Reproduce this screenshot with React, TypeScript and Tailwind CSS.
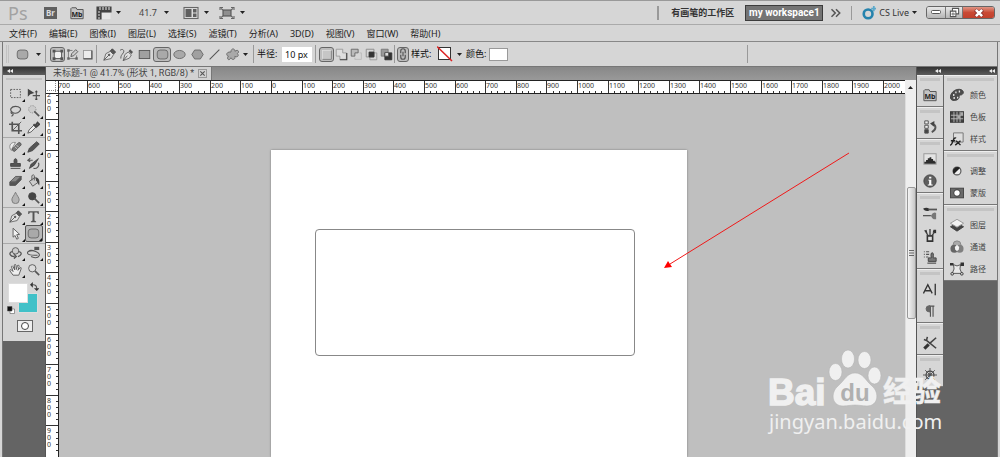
import type { ReactNode } from "react";
import clsx from "clsx";

type IconProps = { children: ReactNode; className?: string };

function Icon({ children, className = "size-4" }: IconProps) {
  return (
    <svg
      viewBox="0 0 16 16"
      className={clsx("block shrink-0", className)}
      fill="none"
      stroke="#555"
      strokeWidth="1.1"
      aria-hidden="true"
    >
      {children}
    </svg>
  );
}

function Caret() {
  return (
    <svg viewBox="0 0 5 3" className="block h-[3px] w-[5px] shrink-0" aria-hidden="true">
      <path d="M0 0h5L2.500 3z" fill="#222" />
    </svg>
  );
}

function Divider() {
  return <div className="h-[18px] w-px shrink-0 bg-[#999]" />;
}

const penPath = (
  <>
    <path d="M1 15l2.500-8L9 4l4 4-3 5z" fill="#e2e2e2" stroke="#666" />
    <path d="M1 15l6-6" />
    <circle cx="7.500" cy="8.500" r="1" fill="#444" />
    <path d="M9 3.500L11.500 1l4 4-2.500 2.500z" fill="#555" stroke="#444" />
  </>
);

const roundedRect = <rect x="1.500" y="2.500" width="13" height="11" rx="3.500" fill="#a9a9a9" stroke="#666" />;

/* ---------- title bar ---------- */

const menus = [
  "文件(F)", "编辑(E)", "图像(I)", "图层(L)", "选择(S)", "滤镜(T)",
  "分析(A)", "3D(D)", "视图(V)", "窗口(W)", "帮助(H)",
];

function MiniBridge() {
  return (
    <>
      <path d="M1 14.500V3l1-1h5l1 2h7v10.500z" fill="#c4c4c4" stroke="#555" />
      <text x="8" y="13" fontSize="8" fontWeight="bold" textAnchor="middle" fill="#222" stroke="none">Mb</text>
    </>
  );
}

function TitleBar() {
  return (
    <header className="flex h-6 items-center border-b border-[#aaa] pr-[5px] pl-2">
      <div className="w-9 text-lg leading-none text-[#a2a2a2]">Ps</div>
      <button className="flex h-3 w-[13px] items-center justify-center bg-[#606060] text-[8px] font-bold text-[#ddd]">
        Br
      </button>
      <button aria-label="Mini Bridge" className="ml-[13px]">
        <Icon className="size-[14px]"><MiniBridge /></Icon>
      </button>
      <button aria-label="View extras" className="ml-3 flex items-center gap-1">
        <Icon>
          <path d="M1 14V2h14v5H5v7z" fill="#444" stroke="#444" />
          <path d="M6 8h8.500v6H6z" fill="#e6e6e6" stroke="none" />
          <path d="M4 2v3M7 2v3M10 2v3M13 2v3M2 7h2M2 10h2M2 13h2" stroke="#ddd" />
        </Icon>
        <Caret />
      </button>
      <button className="ml-[18px] flex items-center gap-[7px] text-[9px] text-[#444]">
        41.7
        <Caret />
      </button>
      <button aria-label="Arrange documents" className="ml-[14px] flex items-center gap-[5px]">
        <Icon>
          <rect x="1" y="2.500" width="14" height="11" fill="#ddd" stroke="#666" />
          <path d="M2.500 4h6v8h-6zM10 4h3.500v3.500H10zM10 8.500h3.500V12H10z" fill="#606060" stroke="none" />
        </Icon>
        <Caret />
      </button>
      <button aria-label="Screen mode" className="ml-[10px] flex items-center gap-[5px]">
        <Icon>
          <rect x="4" y="5" width="8" height="6" fill="#8f8f8f" stroke="#555" />
          <path d="M1 5V2.500h3M12 2.500h3V5M15 11v2.500h-3M4 13.500H1V11M2 3.500l2 1.500M14 3.500L12 5M14 12.500L12 11M2 12.500L4 11" stroke="#666" />
        </Icon>
        <Caret />
      </button>

      <div className="ml-auto h-[14px] w-[2px] bg-[#999]" />
      <button className="ml-3 text-[9px] font-bold whitespace-nowrap text-[#333]">有画笔的工作区</button>
      <button className="ml-[11px] h-4 w-[78px] border border-[#3c3c3c] bg-[#747474] font-[Roboto,sans-serif] text-[10px] leading-none font-bold whitespace-nowrap text-white">
        my workspace1
      </button>
      <button aria-label="More workspaces" className="ml-[7px]">
        <Icon className="size-[12px]">
          <path d="M2 3l5 5-5 5M8 3l5 5-5 5" strokeWidth="2" />
        </Icon>
      </button>
      <div className="ml-[9px] h-[14px] w-px bg-[#999]" />
      <button className="ml-[10px] flex items-center gap-[3px] text-[9px] whitespace-nowrap text-[#333]">
        <Icon className="size-[14px]">
          <circle cx="7" cy="9" r="5" stroke="#2583ad" strokeWidth="3" />
          <path d="M13.500 0v6M10.500 3h6" stroke="#5aa9cb" strokeWidth="2" />
        </Icon>
        CS Live
        <Caret />
      </button>
      <div className="ml-[9px] flex h-[13px] overflow-hidden rounded-[3px] border border-[#666]">
        <button aria-label="Minimize" className="flex w-[18px] items-center justify-center bg-linear-to-b from-[#e8e8e8] to-[#b5b5b5]">
          <svg viewBox="0 0 10 5" className="h-[5px] w-[10px]">
            <rect x="0.500" y="0.500" width="9" height="3" rx="1" fill="#fff" stroke="#555" />
          </svg>
        </button>
        <button aria-label="Restore" className="flex w-[18px] items-center justify-center border-x border-[#777] bg-linear-to-b from-[#e8e8e8] to-[#b5b5b5]">
          <Icon className="size-[11px]">
            <path d="M5 2h9v8H5z" fill="#fff" strokeWidth="1.500" />
            <path d="M2 6h8v8H2z" fill="#fff" strokeWidth="1.500" />
            <path d="M4.500 9h3v2.500h-3z" />
          </Icon>
        </button>
        <button aria-label="Close" className="flex w-[31px] items-center justify-center bg-linear-to-b from-[#e09585] via-[#c94a35] to-[#c2402c]">
          <Icon className="size-[10px]">
            <path d="M2 3l12 10M14 3L2 13" stroke="#833" strokeWidth="6" />
            <path d="M3 3l10 10M13 3L3 13" stroke="#fff" strokeWidth="4" />
          </Icon>
        </button>
      </div>
    </header>
  );
}

function MenuBar() {
  return (
    <nav className="flex h-[17px] items-center gap-3 border-b border-[#888] pl-[9px] text-[9px] text-[#222]">
      {menus.map((m) => (
        <button key={m} className="leading-none whitespace-nowrap">{m}</button>
      ))}
    </nav>
  );
}

/* ---------- options bar ---------- */

type Option = { label: string; icon: ReactNode; width: string; active?: boolean };

function OptionButton({ label, icon, width, active }: Option) {
  return (
    <button
      aria-label={label}
      aria-pressed={!!active}
      className={clsx(
        "flex h-[15px] shrink-0 items-center justify-center",
        width,
        active && "rounded-[3px] border border-[#666] bg-[#bdbdbd]",
      )}
    >
      <Icon className="size-[13px]">{icon}</Icon>
    </button>
  );
}

const modes: Option[] = [
  {
    label: "Shape layers", width: "w-[15px]", active: true,
    icon: (
      <>
        <rect x="4" y="4" width="9" height="9" fill="#f2f2f2" />
        <path d="M2 2h3.500v3.500H2zM11.500 2H15v3.500h-3.500zM2 11.500h3.500V15H2zM11.500 11.500H15V15h-3.500z" fill="#555" stroke="none" />
      </>
    ),
  },
  {
    label: "Paths", width: "w-[15px]",
    icon: (
      <>
        <path d="M3 3v10h10V9M3 3h5" stroke="#777" />
        <path d="M1.500 1.500h3v3h-3zM1.500 11.500h3v3h-3zM11.500 11.500h3v3h-3z" fill="#666" stroke="none" />
        <path d="M6 10.500l1-3.500 5-5 2.500 2.500-5 5z" fill="#ccc" />
      </>
    ),
  },
  {
    label: "Fill pixels", width: "w-[15px]",
    icon: (
      <>
        <rect x="3" y="3" width="10" height="10" fill="#ececec" stroke="#999" />
        <path d="M13.500 3v10.500H3" stroke="#555" strokeWidth="1.500" />
      </>
    ),
  },
];

const shapes: Option[] = [
  { label: "Pen", width: "w-[17px]", icon: penPath },
  {
    label: "Freeform pen", width: "w-[17px]",
    icon: (
      <>
        <path d="M4 15.500l2-7.500 4-3 4 3.500-2.500 4z" fill="#e2e2e2" stroke="#666" />
        <path d="M4 15.500l5-6" />
        <path d="M10.500 4L12.500 1.500l3.500 3.500-2 2.500z" fill="#555" stroke="none" />
        <path d="M0 3c3-3 6 0 4 3s-3 3-3 7" />
      </>
    ),
  },
  { label: "Rectangle", width: "w-[18px]", icon: <rect x="1.500" y="3" width="13" height="10" fill="#a0a0a0" stroke="#555" /> },
  { label: "Rounded rectangle", width: "w-[18px]", active: true, icon: roundedRect },
  { label: "Ellipse", width: "w-[17px]", icon: <ellipse cx="8" cy="8" rx="7" ry="5" fill="#a9a9a9" stroke="#666" /> },
  { label: "Polygon", width: "w-[18px]", icon: <path d="M4.500 2.500h7L15 8l-3.500 5.500h-7L1 8z" fill="#a0a0a0" stroke="#666" /> },
  { label: "Line", width: "w-[17px]", icon: <path d="M2 14L14 2" strokeWidth="1.300" /> },
  {
    label: "Custom shape", width: "w-[18px]",
    icon: <path d="M6 5c0-5 5-5 5-1 4-3 6 1 3 3 3 3-1 5-3 3 1 5-4 5-5 2-2 5-6 1-3-2-4-1-2-6 3-5z" fill="#a9a9a9" stroke="#666" />,
  },
];

const areas: Option[] = [
  {
    label: "Create new shape layer", width: "w-[15px]", active: true,
    icon: (
      <>
        <rect x="3" y="3" width="11" height="11" fill="#c6c6c6" stroke="#ddd" />
        <path d="M14 3v11H3" stroke="#777" />
      </>
    ),
  },
  {
    label: "Add to shape area", width: "w-[15px]",
    icon: (
      <>
        <path d="M1.500 1.500h8v4.500h4.500v8H6V10H1.500z" fill="#dedede" stroke="#999" />
        <path d="M14.500 6v8.500H6" stroke="#444" strokeWidth="1.400" />
      </>
    ),
  },
  {
    label: "Subtract from shape area", width: "w-[15px]",
    icon: (
      <>
        <path d="M1.500 10V1.500H10V6H6v4z" fill="#bbb" stroke="#666" />
        <path d="M6 12v2h8V6h-2" stroke="#bbb" />
      </>
    ),
  },
  {
    label: "Intersect shape areas", width: "w-[15px]",
    icon: (
      <>
        <path d="M1.500 1.500H11V11H1.500z" stroke="#888" />
        <path d="M6 6h8.500v8.500H6z" stroke="#999" />
        <path d="M5 5h6v6H5z" fill="#333" stroke="#333" />
      </>
    ),
  },
  {
    label: "Exclude overlapping shape areas", width: "w-[15px]",
    icon: (
      <>
        <path d="M1.500 1.500H10V10H1.500z" fill="#999" stroke="#777" />
        <path d="M6 6h8.500v8.500H6z" fill="#333" stroke="#333" />
        <path d="M6 5.500h4.500v4.500H6z" fill="#ddd" />
      </>
    ),
  },
];

function OptionsBar() {
  return (
    <div className="flex h-[25px] items-center border-b border-[#777] text-[9px] text-[#111]">
      <div className="flex w-[42px] shrink-0 items-center">
        <div className="ml-[3px] h-[18px] w-[3px] border-x border-[#c2c2c2]" />
        <button aria-label="Tool preset" className="ml-[7px] flex items-center gap-[7px]">
          <Icon className="size-[13px]">{roundedRect}</Icon>
          <Caret />
        </button>
      </div>
      <Divider />
      <div className="flex w-[50px] shrink-0 items-center pl-1">
        {modes.map((o) => <OptionButton key={o.label} {...o} />)}
      </div>
      <Divider />
      <div className="flex w-[156px] shrink-0 items-center pl-1">
        {shapes.map((o) => <OptionButton key={o.label} {...o} />)}
        <button aria-label="Shape options" className="pl-[2px]"><Caret /></button>
      </div>
      <Divider />
      <label htmlFor="radius" className="ml-[3px] w-[25px] whitespace-nowrap">半径:</label>
      <input id="radius" defaultValue="10 px" className="h-[15px] w-[30px] bg-white px-[3px] text-[9px] outline-none" />
      <div className="ml-[3px]"><Divider /></div>
      <div className="flex w-[78px] shrink-0 items-center pl-[3px]">
        {areas.map((o) => <OptionButton key={o.label} {...o} />)}
      </div>
      <Divider />
      <button
        aria-label="Link style to layer"
        className="ml-[2px] flex h-[15px] w-[12px] items-center justify-center rounded-[3px] border border-[#666] bg-[#bdbdbd]"
      >
        <Icon className="size-[12px]">
          <path d="M5 7V4a3 3 0 016 0v3M5 9v3a3 3 0 006 0V9M8 5v6" strokeWidth="1.600" />
        </Icon>
      </button>
      <button className="ml-[2px] flex items-center whitespace-nowrap">
        <span className="w-[26px] text-left">样式:</span>
        <svg viewBox="0 0 16 16" className="mr-1 size-4">
          <rect x="1.500" y="1.500" width="12" height="12" fill="#fff" stroke="#333" />
          <path d="M0 0.500l15 14.500" stroke="#d22" strokeWidth="1.500" />
        </svg>
        <Caret />
      </button>
      <button className="ml-1 flex items-center gap-[3px] whitespace-nowrap">
        颜色:
        <span className="h-[13px] w-[19px] border border-[#999] bg-white" />
      </button>
      <div className="mr-[249px] ml-auto"><Divider /></div>
    </div>
  );
}

/* ---------- tool panel ---------- */

type Tool = { name: string; icon: ReactNode; active?: boolean; single?: boolean };

const toolGroups: Tool[][] = [
  [
    { name: "Marquee", icon: <rect x="2" y="3" width="12" height="10" strokeDasharray="2 1.500" /> },
    {
      name: "Move", single: true,
      icon: (
        <>
          <path d="M1 2v10l3-3 5-1.500z" fill="#444" stroke="none" />
          <path d="M11.500 6v9M7 10.500h9" strokeWidth="1.500" />
          <path d="M11.500 4l2 2.500h-4zM11.500 17l2-2.500h-4z" fill="#444" stroke="none" />
        </>
      ),
    },
    { name: "Lasso", icon: <path d="M4 10C0 7 3 3 8 3s8 3 5 6-7 3-9 1-2 2 0 2 1 2-1 3" strokeWidth="1.400" /> },
    {
      name: "Quick selection",
      icon: (
        <>
          <circle cx="6.500" cy="6.500" r="4.500" stroke="#888" strokeDasharray="1.500 1.500" fill="#ccc" />
          <path d="M9 9l6 6" strokeWidth="2" />
        </>
      ),
    },
    {
      name: "Crop",
      icon: (
        <>
          <path d="M4 1v11h12M0 4h12v12" strokeWidth="2" />
          <path d="M4 12L15 1" />
        </>
      ),
    },
    {
      name: "Eyedropper",
      icon: (
        <>
          <path d="M1 15l1.500-4 6-6 2.500 2.500-6 6z" fill="#eee" />
          <path d="M8 4l4 4M10 6l3-4 2 2-3 3" stroke="#444" strokeWidth="2.200" />
        </>
      ),
    },
  ],
  [
    {
      name: "Healing brush",
      icon: (
        <>
          <path d="M3 13C-1 9 1 2 8 3L4 10z" fill="#eee" stroke="#888" />
          <path d="M4 11l8-8q3 0 3 3l-8 8q-3 0-3-3z" fill="#777" />
          <path d="M7 8l3 3M9 6l3 3" stroke="#ccc" />
        </>
      ),
    },
    { name: "Pencil", icon: <path d="M1 15l2-5L12 2l3 3-8 8z" fill="#555" stroke="#444" /> },
    {
      name: "Clone stamp",
      icon: <path d="M6.500 8c-2-8 5-8 3 0H14v3.500H2V8zM2 14h12" fill="#555" stroke="#444" />,
    },
    {
      name: "History brush",
      icon: (
        <>
          <path d="M3 14l2-5 9-7-5 8z" fill="#555" stroke="#444" />
          <path d="M1 4h6M4 1.500L1 4l3 2M14 7c2 4-2 8-6 7" strokeWidth="1.400" />
        </>
      ),
    },
    {
      name: "Eraser",
      icon: (
        <>
          <path d="M1 10l7-7h7l-7 7z" fill="#888" />
          <path d="M1 10v4h7l7-7V3l-7 7z" fill="#555" />
        </>
      ),
    },
    {
      name: "Paint bucket",
      icon: (
        <>
          <path d="M3 9l7-5 4 6-7 5z" fill="#ccc" />
          <path d="M6 8V2q2-2 3 0v6" />
          <path d="M11 4c4 1 5 5 4 10-2-2-2-5-4-6z" fill="#444" stroke="none" />
        </>
      ),
    },
    { name: "Blur", icon: <path d="M8 1.500C6 6 3.500 8 3.500 11a4.500 4.500 0 009 0c0-3-2.500-5-4.500-9.500z" fill="#b5b5b5" stroke="#777" /> },
    {
      name: "Burn",
      icon: (
        <>
          <circle cx="6.500" cy="6.500" r="4.500" fill="#444" stroke="#444" />
          <path d="M9 9l6 6" strokeWidth="2" />
        </>
      ),
    },
  ],
  [
    { name: "Pen", icon: penPath },
    { name: "Type", icon: <path d="M1.500 5V1.500h13V5h-1l-1-2H9.200v10l2 1v1H4.800v-1l2-1V3H3.500l-1 2z" fill="#555" stroke="none" /> },
    { name: "Path selection", icon: <path d="M5 1.500v11l2.500-2 2 4.500 2-1-2-4.500 3.500-.500z" fill="#f2f2f2" /> },
    { name: "Rounded rectangle", active: true, icon: roundedRect },
  ],
  [
    {
      name: "3D object rotate",
      icon: (
        <>
          <circle cx="8" cy="6" r="4" fill="#ccc" />
          <path d="M4 7C-1 8 1 13 7 13M12 7c5 1 3 5-1 6M6 10l3 3-3 2.500" strokeWidth="1.600" />
        </>
      ),
    },
    {
      name: "3D camera rotate",
      icon: (
        <>
          <path d="M9 6C4 5-1 7 1 9.500s9 1.500 12 2M2 6c4-2 15 2 13 6s-8 2-10 1" strokeWidth="1.300" />
          <path d="M9 1h6v4H9z" fill="#555" stroke="none" />
        </>
      ),
    },
    {
      name: "Hand",
      icon: <path d="M5 15L1 9.500q0-2 2-1l2 2-2-6q1-2 2 0l2 4-.500-6q1-2 2 0L9 8l1.500-5q2-1 2 1L11 9l2.500-3q2-1 1.500 1l-3 8z" fill="#eee" />,
    },
    {
      name: "Zoom", single: true,
      icon: (
        <>
          <circle cx="6.500" cy="6.500" r="4.500" fill="#ddd" />
          <path d="M10 10l5 5" strokeWidth="2" />
        </>
      ),
    },
  ],
];

function ToolButton({ name, icon, active, single }: Tool) {
  return (
    <button
      aria-label={name}
      className={clsx(
        "relative flex h-[17px] items-center justify-center",
        active && "rounded-[2px] border border-[#555] bg-[#b8b8b8]",
      )}
    >
      <Icon className="size-[13px]">{icon}</Icon>
      {!single && (
        <svg viewBox="0 0 3 3" className="absolute right-0 bottom-0 size-[3px]">
          <path d="M3 0v3H0z" fill="#111" />
        </svg>
      )}
    </button>
  );
}

function CollapseArrows() {
  return (
    <svg viewBox="0 0 6 4" className="h-[4px] w-[6px]">
      <path d="M3 0v4L0 2zM6 0v4L3 2z" fill="#eee" />
    </svg>
  );
}

function ToolPanel() {
  return (
    <aside className="w-[43px] shrink-0 border-r border-[#555] bg-[#646464]">
      <div className="flex h-2 items-center bg-linear-to-b from-[#333] to-[#5c5c5c] px-1">
        <CollapseArrows />
      </div>
      <div className="bg-[#d6d6d6] pb-[9px]">
        <div className="px-[3px] pt-[3px] pb-[5px]">
          <div className="h-[2px] bg-[#c2c2c2]" />
        </div>
        {toolGroups.map((group, i) => (
          <div
            key={i}
            className={clsx("grid grid-cols-2 pr-[2px] pl-[3px]", i > 0 && "mt-px border-t border-[#aaa]")}
          >
            {group.map((t) => <ToolButton key={t.name} {...t} />)}
          </div>
        ))}
        <div className="relative mt-1 h-[34px]">
          <button aria-label="Background color" className="absolute top-[11px] left-[15px] size-5 border border-[#ddd] bg-[#41c1c8]" />
          <button aria-label="Foreground color" className="absolute top-px left-[5px] size-5 border border-[#ddd] bg-white" />
          <button aria-label="Swap colors" className="absolute top-0 left-[27px]">
            <Icon className="size-[9px]">
              <path d="M4 5q8-1 8 7" strokeWidth="2" />
              <path d="M5 0v10L0 5zM7 11h10l-5 5z" fill="#333" stroke="none" />
            </Icon>
          </button>
          <button aria-label="Default colors" className="absolute top-[24px] left-1">
            <Icon className="size-2">
              <path d="M6 6h9v9H6z" fill="#fff" />
              <path d="M1 1h9v9H1z" fill="#111" />
            </Icon>
          </button>
        </div>
        <button aria-label="Quick mask" className="mt-1 ml-[14px] flex h-3 w-4 items-center justify-center border border-[#666] bg-[#eee]">
          <span className="size-2 rounded-full border border-[#444] bg-white" />
        </button>
      </div>
    </aside>
  );
}

/* ---------- document ---------- */

const STEP = 30.6;

function rulerMarks(origin: number, from: number, to: number) {
  const marks = [];
  for (let i = from; i <= to; i++) {
    marks.push({
      at: Math.round(origin + i * STEP),
      label: String(Math.abs(i) * 100),
      minor: [1, 2, 3, 4].map((k) => Math.round(origin + (i + k / 5) * STEP)),
    });
  }
  return marks;
}

function HorizontalRuler() {
  return (
    <svg className="h-[14px] min-w-0 flex-1 border-y border-[#222] bg-white" aria-hidden="true">
      {rulerMarks(212, -7, 20).map((m) => (
        <g key={m.at}>
          <rect x={m.at} y="0" width="1" height="12" fill="#333" />
          {m.minor.map((x) => <rect key={x} x={x} y="10" width="1" height="2" fill="#333" />)}
          <text x={m.at + 1} y="7" fontSize="7" fill="#333">{m.label}</text>
        </g>
      ))}
    </svg>
  );
}

function VerticalRuler() {
  return (
    <svg className="w-[13px] shrink-0 border-r border-[#222] bg-white" aria-hidden="true">
      {rulerMarks(56, -2, 9).map((m) => (
        <g key={m.at}>
          <rect x="0" y={m.at} width="12" height="1" fill="#333" />
          {m.minor.map((y) => <rect key={y} x="10" y={y} width="2" height="1" fill="#333" />)}
          {m.label.split("").map((d, i) => (
            <text key={i} x="1" y={m.at + 8 + i * 7} fontSize="7" fill="#333">{d}</text>
          ))}
        </g>
      ))}
    </svg>
  );
}

function Canvas() {
  return (
    <div className="relative min-w-0 flex-1 overflow-hidden bg-[#bfbfbf]">
      <div className="absolute top-[56px] bottom-0 left-[212px] w-[416px] bg-white shadow-[0_0_2px_#777]">
        <div className="absolute top-[79px] left-[44px] h-[127px] w-[320px] rounded-[4px] border border-[#888]" />
      </div>
      <svg className="absolute inset-0 size-full" aria-hidden="true">
        <path d="M790 59L611 170" stroke="#f01818" />
        <path d="M605 174l4-7 4 6z" fill="#f00" />
      </svg>
    </div>
  );
}

function Scrollbar() {
  return (
    <div className="flex w-[11px] shrink-0 flex-col items-center border-l border-[#ddd] bg-[#eee]">
      <div className="h-[93px]" />
      <div className="flex h-[132px] w-[9px] items-center justify-center rounded-[2px] border border-[#999] bg-linear-to-r from-[#f4f4f4] to-[#c8c8c8]">
        <svg viewBox="0 0 5 6" className="h-[6px] w-[5px]">
          <path d="M0 .500h5M0 3h5M0 5.500h5" stroke="#666" />
        </svg>
      </div>
    </div>
  );
}

function DocumentWindow() {
  return (
    <main className="flex min-w-0 flex-1 flex-col">
      <div className="flex h-[13px] shrink-0 items-end bg-linear-to-b from-[#888] to-[#999]">
        <div className="flex h-[13px] w-[166px] items-center justify-between border-r border-[#777] bg-[#d2d2d2] pr-[4px] pl-[7px] text-[#444]">
          <span className="font-[Roboto,'Noto_Sans_CJK_SC',sans-serif] text-[9px] leading-none whitespace-nowrap">
            未标题-1 @ 41.7% (形状 1, RGB/8) *
          </span>
          <button aria-label="Close tab" className="flex size-[9px] items-center justify-center border border-[#999]">
            <Icon className="size-[7px]">
              <path d="M3 3l10 10M13 3L3 13" strokeWidth="2.500" />
            </Icon>
          </button>
        </div>
      </div>
      <div className="flex">
        <svg viewBox="0 0 13 14" className="h-[14px] w-[13px] shrink-0 bg-white" aria-hidden="true">
          <path d="M0 .500h13M0 13.500h13M12.500 0v14" stroke="#222" />
          <path d="M9.500 1v12M1 10.500h11" stroke="#888" strokeDasharray="1 1" />
        </svg>
        <HorizontalRuler />
        <button aria-label="Scroll up" className="flex w-[11px] items-center justify-center bg-[#eee]">
          <svg viewBox="0 0 5 3" className="h-[3px] w-[5px]">
            <path d="M0 3h5L2.500 0z" fill="#222" />
          </svg>
        </button>
      </div>
      <div className="flex min-h-[363px] flex-1">
        <VerticalRuler />
        <Canvas />
        <Scrollbar />
      </div>
    </main>
  );
}

/* ---------- right docks ---------- */

type Panel = { name: string; icon: ReactNode };

const iconDock: Panel[][] = [
  [{ name: "Mini Bridge", icon: <MiniBridge /> }],
  [
    {
      name: "History",
      icon: (
        <>
          <path d="M2 1h4v3.500H2zM2 6h4v3.500H2z" fill="#eee" />
          <path d="M2 11h4v4H2z" fill="#444" />
          <path d="M10 14c6-3 5-9 1-9" strokeWidth="2.200" />
          <path d="M8 4l5-3v7z" fill="#444" stroke="none" />
        </>
      ),
    },
  ],
  [
    {
      name: "Histogram",
      icon: (
        <>
          <rect x="1" y="2" width="14" height="12" fill="#e4e4e4" stroke="#999" />
          <path d="M1.500 13.500V11h2V9h2V7h2V6h2v2h2v2h2v1h1v2.500z" fill="#2c2c2c" stroke="none" />
        </>
      ),
    },
    {
      name: "Info",
      icon: (
        <>
          <circle cx="8" cy="8" r="7" fill="#5e5e5e" stroke="#444" />
          <path d="M7 3h2.500v2.200H7zM6 6.500h3.500V12H11v1H5.500v-1H7V7.500H6z" fill="#fff" stroke="none" />
        </>
      ),
    },
  ],
  [
    {
      name: "Brush presets",
      icon: (
        <>
          <path d="M0 3q4-2 7 0v2q-4 2-7-2z" fill="#333" stroke="none" />
          <path d="M6 4h10" strokeWidth="2" />
          <path d="M0 11h9" strokeWidth="1.500" />
          <path d="M9 11q3-5 6-3v7q-4 1-6-4z" fill="#777" stroke="none" />
        </>
      ),
    },
    {
      name: "Brush",
      icon: (
        <>
          <path d="M5 9h6v6H5z" fill="#ddd" stroke="#333" strokeWidth="1.800" />
          <path d="M6 9L3 4M8 9V1M10 9l3-4" stroke="#444" strokeWidth="1.600" />
          <path d="M1 3l3-1 1 4zM11 5l1-3h3v4z" fill="#333" stroke="none" />
        </>
      ),
    },
    {
      name: "Clone source",
      icon: (
        <>
          <path d="M9.500 9c-2-8 4-8 2 0H15v4H6V9z" fill="#777" stroke="#444" />
          <path d="M5 15h10" stroke="#333" />
          <path d="M1 2h1M3.500 2H7M1 5h1M3.500 5H7M1 8h1M3.500 8H6" strokeWidth="1.300" />
        </>
      ),
    },
  ],
  [
    { name: "Character", icon: <path d="M0.500 13L5.500 3l5 10M2.500 10h6M14 2v13" stroke="#333" strokeWidth="1.500" /> },
    {
      name: "Paragraph",
      icon: (
        <>
          <path d="M8.500 2.500v12M11.500 2.500v12M7 2.500h6" strokeWidth="1.300" />
          <path d="M8 2v7H7a3.500 3.500 0 010-7z" fill="#666" stroke="#666" />
        </>
      ),
    },
  ],
  [
    {
      name: "Tool presets",
      icon: (
        <>
          <path d="M1.500 14.500l5-5" stroke="#333" strokeWidth="3.500" />
          <path d="M7 9l8-7M4 5l11 9M1 4l3 1 1-4" stroke="#444" strokeWidth="1.800" />
        </>
      ),
    },
  ],
  [
    {
      name: "Navigator",
      icon: (
        <>
          <circle cx="8" cy="8" r="4.500" stroke="#444" strokeWidth="1.400" />
          <circle cx="8" cy="8" r="1.500" fill="#444" />
          <path d="M8 0v16M0 8h16M2.500 2.500l11 11M13.500 2.500l-11 11" stroke="#555" />
        </>
      ),
    },
  ],
];

const labelDock: Panel[][] = [
  [
    {
      name: "颜色",
      icon: (
        <>
          <path d="M0.500 10C1 4 8 0 13 2c4 2 2 6-1 6s0 3-3 5-9 2-8.500-3z" fill="#4c4c4c" stroke="#444" />
          <path d="M3.500 8H5M6 5h1.500M10 4h1.500M4 11.500h1.500M8 11h1.500" stroke="#e4e4e4" strokeWidth="2.200" />
        </>
      ),
    },
    {
      name: "色板",
      icon: (
        <>
          <rect x="0.500" y="2" width="15" height="12" fill="#444" stroke="#333" />
          <path d="M1 6h14M1 10h14M4.500 2v12M8 2v12M11.500 2v12" stroke="#bbb" strokeWidth="1" />
          <path d="M12 2.500h3V6h-3zM8.500 6.500h3v3h-3z" fill="#aaa" stroke="none" />
        </>
      ),
    },
    {
      name: "样式",
      icon: (
        <>
          <path d="M4 1h11v10.500H4z" fill="#ddd" stroke="#777" />
          <path d="M0 15q2 0 3-4l1-2q1-3 3-2M1 10h5M7 10l5 5M12 10l-6 5" strokeWidth="1.600" stroke="#222" />
        </>
      ),
    },
  ],
  [
    {
      name: "调整",
      icon: (
        <>
          <circle cx="8" cy="8" r="4.500" fill="#eee" strokeWidth="1.300" />
          <path d="M4.500 11.500a5 5 0 017-7z" fill="#222" stroke="none" />
        </>
      ),
    },
    {
      name: "蒙版",
      icon: (
        <>
          <rect x="0.500" y="2.500" width="15" height="11" fill="#6a6a6a" stroke="#444" />
          <circle cx="8" cy="8" r="3.800" fill="#fff" stroke="#333" />
        </>
      ),
    },
  ],
  [
    {
      name: "图层",
      icon: (
        <>
          <path d="M0.500 10L8 6l7.500 4L8 15z" fill="#444" stroke="#444" />
          <path d="M0.500 6L8 1.500 15.500 6 8 10.500z" fill="#f2f2f2" stroke="#999" />
        </>
      ),
    },
    {
      name: "通道",
      icon: (
        <>
          <circle cx="8" cy="5.500" r="4.500" fill="#aaa" stroke="#888" />
          <circle cx="5" cy="10" r="4.500" fill="#666" stroke="none" />
          <circle cx="11" cy="10" r="4.500" fill="#808080" stroke="none" />
          <path d="M8 5.500l2.500 2.500-.500 3L8 12.500 6 11l-.500-3z" fill="#f2f2f2" stroke="none" />
        </>
      ),
    },
    {
      name: "路径",
      icon: (
        <>
          <path d="M2.500 13Q6 8 4 3q4 3 8 0-2 5 1.500 10z" fill="#e8e8e8" />
          <path d="M0 1h4v3H0zM12 0.500h4v4h-4z" fill="#333" stroke="none" />
          <circle cx="2.500" cy="13.500" r="1.500" fill="#eee" stroke="#333" />
          <circle cx="13.500" cy="13.500" r="1.500" fill="#eee" stroke="#333" />
        </>
      ),
    },
  ],
];

function Dock({ sections, labelled }: { sections: Panel[][]; labelled?: boolean }) {
  return (
    <div className={clsx("shrink-0", labelled ? "w-[53px]" : "w-[26px]")}>
      {sections.map((section, i) => (
        <section key={i} className="border-t border-b border-t-[#eee] border-b-[#777] bg-[#d6d6d6]">
          <div className="h-2 px-[3px] pt-[2px]">
            <div className="h-[3px] bg-[#c4c4c4]" />
          </div>
          {section.map((p) => (
            <button
              key={p.name}
              aria-label={p.name}
              className={clsx(
                "flex h-[22px] w-full items-center text-[8px] leading-none whitespace-nowrap text-[#444]",
                labelled ? "gap-[6px] pl-[6px]" : "justify-center",
              )}
            >
              <Icon className="size-[14px]">{p.icon}</Icon>
              {labelled && p.name}
            </button>
          ))}
        </section>
      ))}
    </div>
  );
}

function RightDocks() {
  return (
    <aside className="shrink-0 border-l border-[#555] bg-[#646464]">
      <div className="flex h-2 items-center bg-linear-to-b from-[#333] to-[#5c5c5c] pr-[2px]">
        <div className="flex w-[24px] justify-end"><CollapseArrows /></div>
        <div className="ml-auto"><CollapseArrows /></div>
      </div>
      <div className="flex gap-px">
        <Dock sections={iconDock} />
        <Dock sections={labelDock} labelled />
      </div>
    </aside>
  );
}

/* ---------- watermark ---------- */

function Watermark() {
  return (
    <svg
      viewBox="0 0 180 90"
      className="pointer-events-none absolute right-[52px] bottom-[20px] h-[90px] w-[180px] overflow-visible"
      fill="#f0f0f0"
    >
      <g stroke="#f0f0f0" fontWeight="bold">
        <text x="0" y="58" fontSize="37" strokeWidth="1.500" fontFamily="Liberation Sans, sans-serif">Bai</text>
        <text x="115" y="55" fontSize="29" strokeWidth="0.500" fontFamily="Noto Sans CJK SC, sans-serif">经验</text>
      </g>
      <g stroke="#b0b0b0" strokeWidth="0.500">
        <ellipse cx="67.500" cy="25" rx="6.500" ry="8.500" />
        <ellipse cx="80" cy="12" rx="6.500" ry="9" />
        <ellipse cx="96.500" cy="13" rx="6.500" ry="8.500" />
        <ellipse cx="106.500" cy="28.500" rx="6.500" ry="8.500" />
        <path d="M87 26c8 0 10 7 17 13 8 7 6 20-5 20-5 0-7-1-12-1s-7 1-12 1c-11 0-13-13-5-20 7-6 9-13 17-13z" />
      </g>
      <text x="87" y="54" fontSize="24" textAnchor="middle" fontWeight="bold" fill="#b0b0b0" fontFamily="Liberation Sans, sans-serif">du</text>
      <text x="1" y="82" fontSize="20">jingyan.baidu.com</text>
    </svg>
  );
}

export default function App() {
  return (
    <div className="relative flex min-h-screen flex-col overflow-hidden border-t border-[#999] bg-[#d6d6d6] font-['Noto_Sans','Noto_Sans_CJK_SC',sans-serif]">
      <TitleBar />
      <MenuBar />
      <div className="mr-[2px] ml-[2px] flex flex-1 flex-col border-x border-[#777]">
        <OptionsBar />
        <div className="flex flex-1">
          <ToolPanel />
          <DocumentWindow />
          <RightDocks />
        </div>
      </div>
      <Watermark />
    </div>
  );
}
